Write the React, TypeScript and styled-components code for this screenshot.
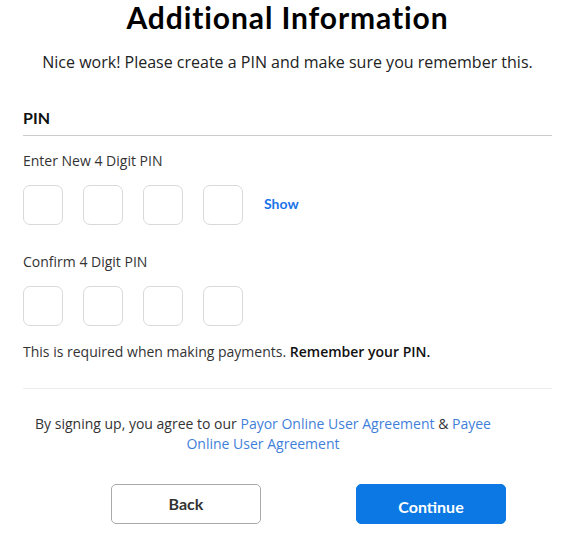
import styled, { createGlobalStyle } from "styled-components";

const GlobalStyle = createGlobalStyle`
  html, body {
    margin: 0;
    padding: 0;
    background: #fff;
  }
  body {
    font-family: "Open Sans", sans-serif;
    color: #333;
  }
`;

const PinRow = ({ showToggle }: { showToggle?: boolean }) => {
  return (
    <BoxRow>
      {[0, 1, 2, 3].map((i) => (
        <PinBox key={i} type="password" maxLength={1} inputMode="numeric" />
      ))}
      {showToggle && <ShowLink>Show</ShowLink>}
    </BoxRow>
  );
};

const App = () => {
  return (
    <Page>
      <GlobalStyle />
      <Title>Additional Information</Title>
      <Subtitle>
        Nice work! Please create a PIN and make sure you remember this.
      </Subtitle>

      <SectionHeader>PIN</SectionHeader>

      <FieldLabel>Enter New 4 Digit PIN</FieldLabel>
      <PinRow showToggle />

      <FieldLabel $spaced>Confirm 4 Digit PIN</FieldLabel>
      <PinRow />

      <Helper>
        This is required when making payments. <strong>Remember your PIN.</strong>
      </Helper>

      <Divider />

      <Agreement>
        By signing up, you agree to our <Link>Payor Online User Agreement</Link>{" "}
        &amp; <Link>Payee Online User Agreement</Link>
      </Agreement>

      <Actions>
        <Button>Back</Button>
        <Button $primary>Continue</Button>
      </Actions>
    </Page>
  );
};

const Page = styled.div`
  width: 529px;
  margin-left: 23px;
  display: flex;
  flex-direction: column;
`;

const Title = styled.h1`
  margin: 0;
  font-family: Lato, sans-serif;
  font-size: 30px;
  font-weight: 700;
  letter-spacing: 0.9px;
  line-height: 34px;
  color: #000;
  text-align: center;
`;

const Subtitle = styled.p`
  margin: 16px 0 0;
  font-size: 16px;
  line-height: 24px;
  text-align: center;
  color: #222;
`;

const SectionHeader = styled.div`
  margin-top: 34px;
  padding-bottom: 7px;
  border-bottom: 1px solid #ccc;
  font-family: Lato, sans-serif;
  font-size: 16px;
  font-weight: 700;
  line-height: 20px;
  color: #111;
`;

const FieldLabel = styled.div<{ $spaced?: boolean }>`
  margin-top: ${(p) => (p.$spaced ? "27px" : "15px")};
  font-size: 14px;
  line-height: 20px;
  color: #333;
`;

const BoxRow = styled.div`
  display: flex;
  align-items: center;
  gap: 20px;
  margin-top: 14px;
`;

const PinBox = styled.input`
  box-sizing: border-box;
  width: 40px;
  height: 40px;
  padding: 0;
  border: 1px solid #d9d9d9;
  border-radius: 7px;
  background: #fff;
  text-align: center;
  font-size: 18px;
  outline: none;
`;

const ShowLink = styled.span`
  margin: 0 0 3px 1px;
  font-family: Lato, sans-serif;
  font-size: 14px;
  font-weight: 700;
  color: #1a73e8;
  cursor: pointer;
`;

const Helper = styled.p`
  margin: 16px 0 0;
  font-size: 14px;
  line-height: 20px;
  color: #333;

  strong {
    font-weight: 600;
    color: #111;
  }
`;

const Divider = styled.div`
  margin-top: 26px;
  height: 1px;
  background: #ececec;
`;

const Agreement = styled.p`
  width: 480px;
  margin: 25px 0 0;
  font-size: 14px;
  line-height: 20px;
  text-align: center;
  color: #333;
`;

const Link = styled.a`
  color: #3f7fd9;
  text-decoration: none;
  cursor: pointer;
`;

const Actions = styled.div`
  display: flex;
  gap: 95px;
  margin-top: 30px;
  padding-left: 88px;
`;

const Button = styled.button<{ $primary?: boolean }>`
  box-sizing: border-box;
  width: 150px;
  height: 40px;
  border-radius: 5px;
  border: 1px solid ${(p) => (p.$primary ? "#0b78e3" : "#aaa")};
  background: ${(p) => (p.$primary ? "#0b78e3" : "#fff")};
  color: ${(p) => (p.$primary ? "#fff" : "#333")};
  font-family: Lato, sans-serif;
  font-size: 16px;
  font-weight: 700;
  padding: ${(p) => (p.$primary ? "4px 0 0" : "0 0 2px")};
  cursor: pointer;
`;

export default App;
